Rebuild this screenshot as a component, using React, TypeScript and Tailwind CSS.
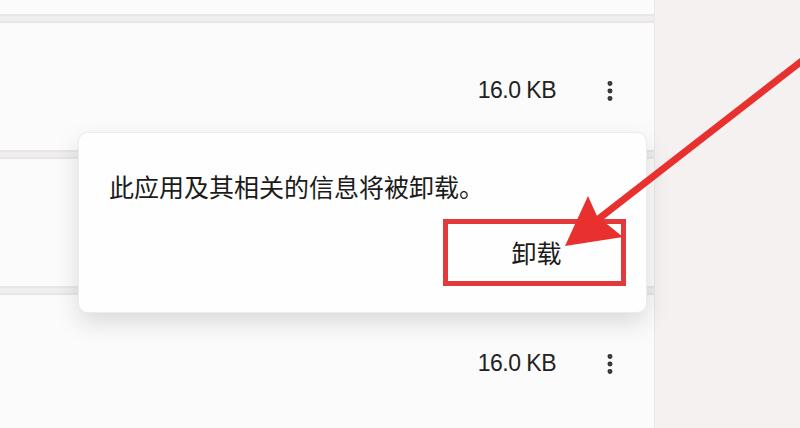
import { MoreVertical } from 'lucide-react';

const Row = ({ size, last }: { size: string; last?: boolean }) => (
    <div
        className={
            last
                ? 'h-[140px] pt-[8px] pb-[9px] bg-[#fcfbfb] border-t-2 border-[#e7e5e5] flex items-center justify-end pr-[24px] shrink-0'
                : 'h-[131px] pt-[8px] bg-[#fcfbfb] border-y-2 border-[#e7e5e5] flex items-center justify-end pr-[24px] shrink-0'
        }
    >
        <span className="text-[23px] text-[#222] tracking-[-0.5px] font-['Liberation_Sans',sans-serif]">{size}</span>
        <div className="w-[40px] ml-[34px] flex items-center justify-center text-[#333]">
            <MoreVertical className="w-[26px] h-[26px]" strokeWidth={2.6} />
        </div>
    </div>
);

export default function App() {
    return (
        <div className="relative w-[800px] h-[428px] overflow-hidden bg-[#f5f1f1] flex font-['Noto_Sans_CJK_SC',sans-serif]">
            {/* app list */}
            <div className="w-[655px] h-full flex flex-col gap-[5px] bg-[#efeded] border-r border-[#ebe8e8]">
                <div className="h-[16px] bg-[#fcfbfb] border-b-2 border-[#e7e5e5] shrink-0" />
                <Row size="16.0 KB" />
                <Row size="" />
                <Row size="16.0 KB" last />
            </div>

            {/* uninstall flyout */}
            <div className="absolute left-[78px] top-[132px] w-[569px] h-[181px] bg-[#fefefe] rounded-[10px] border border-[#ececec] shadow-[0_10px_24px_rgba(0,0,0,0.13)] flex flex-col">
                <p className="mt-[38px] ml-[30px] text-[25px] leading-[30px] text-[#1b1b1b]">
                    此应用及其相关的信息将被卸载。
                </p>
                <div className="mt-auto mb-[26px] mr-[20px] self-end w-[183px] h-[67px] border-[5px] border-[#e23a3a] flex items-center justify-center">
                    <span className="text-[25px] text-[#1b1b1b] ml-[4px]">卸载</span>
                </div>
            </div>

            {/* annotation arrow */}
            <svg className="absolute inset-0 pointer-events-none" width="800" height="428" viewBox="0 0 800 428">
                <line x1="803" y1="60" x2="592" y2="224" stroke="#e8302e" strokeWidth="7" strokeLinecap="round" />
                <polygon points="565,246 588,196 597,216 623,237" fill="#e8302e" />
            </svg>
        </div>
    );
}
